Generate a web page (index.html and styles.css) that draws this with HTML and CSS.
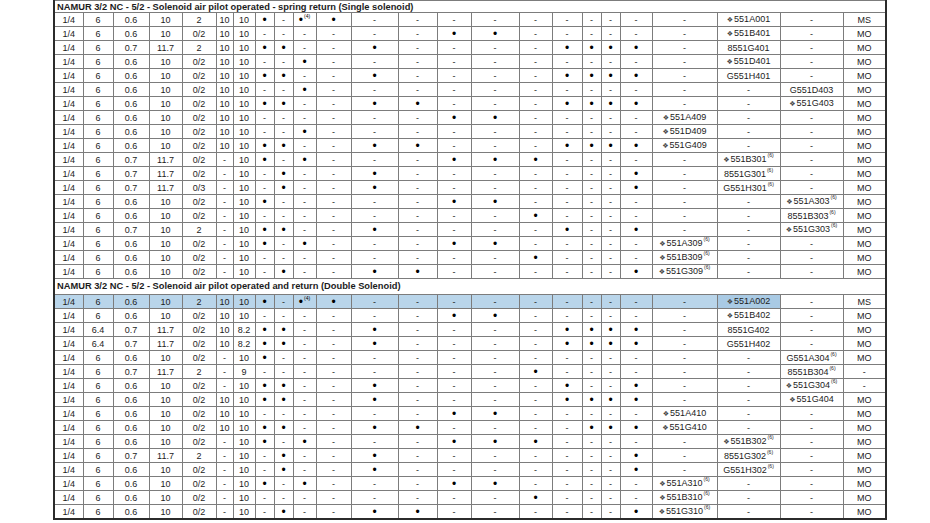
FILE: index.html
```html
<!DOCTYPE html>
<html>
<head>
<meta charset="utf-8">
<link rel="stylesheet" href="styles.css">
</head>
<body>
<div class="sheet">
<table class="grid">
<colgroup>
<col class="c1"><col class="c2"><col class="c3"><col class="c4"><col class="c5"><col class="c6"><col class="c7"><col class="c8"><col class="c9"><col class="c10"><col class="c11"><col class="c12"><col class="c13"><col class="c14"><col class="c15"><col class="c16"><col class="c17"><col class="c18"><col class="c19"><col class="c20"><col class="c21"><col class="c22"><col class="c23"><col class="c24">
</colgroup>
<tbody>
<tr class="sec first"><td colspan="24">NAMUR 3/2 NC - 5/2 - Solenoid air pilot operated - spring return (Single solenoid)</td></tr>
<tr><td>1/4</td><td>6</td><td>0.6</td><td>10</td><td>2</td><td>10</td><td>10</td><td class="b">•</td><td>-</td><td class="b">•<sup>(4)</sup></td><td class="b">•</td><td>-</td><td>-</td><td>-</td><td>-</td><td>-</td><td>-</td><td>-</td><td>-</td><td>-</td><td>-</td><td><span class="mk">❖</span>551A001</td><td>-</td><td>MS</td></tr>
<tr><td>1/4</td><td>6</td><td>0.6</td><td>10</td><td>0/2</td><td>10</td><td>10</td><td>-</td><td>-</td><td>-</td><td>-</td><td>-</td><td>-</td><td class="b">•</td><td class="b">•</td><td>-</td><td>-</td><td>-</td><td>-</td><td>-</td><td>-</td><td><span class="mk">❖</span>551B401</td><td>-</td><td>MO</td></tr>
<tr><td>1/4</td><td>6</td><td>0.7</td><td>11.7</td><td>2</td><td>10</td><td>10</td><td class="b">•</td><td class="b">•</td><td>-</td><td>-</td><td class="b">•</td><td>-</td><td>-</td><td>-</td><td>-</td><td class="b">•</td><td class="b">•</td><td class="b">•</td><td class="b">•</td><td>-</td><td>8551G401</td><td>-</td><td>MO</td></tr>
<tr><td>1/4</td><td>6</td><td>0.6</td><td>10</td><td>0/2</td><td>10</td><td>10</td><td>-</td><td>-</td><td class="b">•</td><td>-</td><td>-</td><td>-</td><td>-</td><td>-</td><td>-</td><td>-</td><td>-</td><td>-</td><td>-</td><td>-</td><td><span class="mk">❖</span>551D401</td><td>-</td><td>MO</td></tr>
<tr><td>1/4</td><td>6</td><td>0.6</td><td>10</td><td>0/2</td><td>10</td><td>10</td><td class="b">•</td><td class="b">•</td><td>-</td><td>-</td><td class="b">•</td><td>-</td><td>-</td><td>-</td><td>-</td><td class="b">•</td><td class="b">•</td><td class="b">•</td><td class="b">•</td><td>-</td><td>G551H401</td><td>-</td><td>MO</td></tr>
<tr><td>1/4</td><td>6</td><td>0.6</td><td>10</td><td>0/2</td><td>10</td><td>10</td><td>-</td><td>-</td><td class="b">•</td><td>-</td><td>-</td><td>-</td><td>-</td><td>-</td><td>-</td><td>-</td><td>-</td><td>-</td><td>-</td><td>-</td><td>-</td><td>G551D403</td><td>MO</td></tr>
<tr><td>1/4</td><td>6</td><td>0.6</td><td>10</td><td>0/2</td><td>10</td><td>10</td><td class="b">•</td><td class="b">•</td><td>-</td><td>-</td><td class="b">•</td><td class="b">•</td><td>-</td><td>-</td><td>-</td><td class="b">•</td><td class="b">•</td><td class="b">•</td><td class="b">•</td><td>-</td><td>-</td><td><span class="mk">❖</span>551G403</td><td>MO</td></tr>
<tr><td>1/4</td><td>6</td><td>0.6</td><td>10</td><td>0/2</td><td>10</td><td>10</td><td>-</td><td>-</td><td>-</td><td>-</td><td>-</td><td>-</td><td class="b">•</td><td class="b">•</td><td>-</td><td>-</td><td>-</td><td>-</td><td>-</td><td><span class="mk">❖</span>551A409</td><td>-</td><td>-</td><td>MO</td></tr>
<tr><td>1/4</td><td>6</td><td>0.6</td><td>10</td><td>0/2</td><td>10</td><td>10</td><td>-</td><td>-</td><td class="b">•</td><td>-</td><td>-</td><td>-</td><td>-</td><td>-</td><td>-</td><td>-</td><td>-</td><td>-</td><td>-</td><td><span class="mk">❖</span>551D409</td><td>-</td><td>-</td><td>MO</td></tr>
<tr><td>1/4</td><td>6</td><td>0.6</td><td>10</td><td>0/2</td><td>10</td><td>10</td><td class="b">•</td><td class="b">•</td><td>-</td><td>-</td><td class="b">•</td><td class="b">•</td><td>-</td><td>-</td><td>-</td><td class="b">•</td><td class="b">•</td><td class="b">•</td><td class="b">•</td><td><span class="mk">❖</span>551G409</td><td>-</td><td>-</td><td>MO</td></tr>
<tr><td>1/4</td><td>6</td><td>0.7</td><td>11.7</td><td>0/2</td><td>-</td><td>10</td><td class="b">•</td><td>-</td><td class="b">•</td><td>-</td><td>-</td><td>-</td><td class="b">•</td><td class="b">•</td><td class="b">•</td><td>-</td><td>-</td><td>-</td><td>-</td><td>-</td><td><span class="mk">❖</span>551B301<sup>(6)</sup></td><td>-</td><td>MO</td></tr>
<tr><td>1/4</td><td>6</td><td>0.7</td><td>11.7</td><td>0/2</td><td>-</td><td>10</td><td>-</td><td class="b">•</td><td>-</td><td>-</td><td class="b">•</td><td>-</td><td>-</td><td>-</td><td>-</td><td>-</td><td>-</td><td>-</td><td class="b">•</td><td>-</td><td>8551G301<sup>(6)</sup></td><td>-</td><td>MO</td></tr>
<tr><td>1/4</td><td>6</td><td>0.7</td><td>11.7</td><td>0/3</td><td>-</td><td>10</td><td>-</td><td class="b">•</td><td>-</td><td>-</td><td class="b">•</td><td>-</td><td>-</td><td>-</td><td>-</td><td>-</td><td>-</td><td>-</td><td class="b">•</td><td>-</td><td>G551H301<sup>(6)</sup></td><td>-</td><td>MO</td></tr>
<tr><td>1/4</td><td>6</td><td>0.6</td><td>10</td><td>0/2</td><td>-</td><td>10</td><td class="b">•</td><td>-</td><td>-</td><td>-</td><td>-</td><td>-</td><td class="b">•</td><td class="b">•</td><td>-</td><td>-</td><td>-</td><td>-</td><td>-</td><td>-</td><td>-</td><td><span class="mk">❖</span>551A303<sup>(6)</sup></td><td>MO</td></tr>
<tr><td>1/4</td><td>6</td><td>0.6</td><td>10</td><td>0/2</td><td>-</td><td>10</td><td>-</td><td>-</td><td>-</td><td>-</td><td>-</td><td>-</td><td>-</td><td>-</td><td class="b">•</td><td>-</td><td>-</td><td>-</td><td>-</td><td>-</td><td>-</td><td>8551B303<sup>(6)</sup></td><td>MO</td></tr>
<tr><td>1/4</td><td>6</td><td>0.7</td><td>10</td><td>2</td><td>-</td><td>10</td><td class="b">•</td><td class="b">•</td><td>-</td><td>-</td><td class="b">•</td><td>-</td><td>-</td><td>-</td><td>-</td><td class="b">•</td><td>-</td><td>-</td><td class="b">•</td><td>-</td><td>-</td><td><span class="mk">❖</span>551G303<sup>(6)</sup></td><td>MO</td></tr>
<tr><td>1/4</td><td>6</td><td>0.6</td><td>10</td><td>0/2</td><td>-</td><td>10</td><td class="b">•</td><td>-</td><td class="b">•</td><td>-</td><td>-</td><td>-</td><td class="b">•</td><td class="b">•</td><td>-</td><td>-</td><td>-</td><td>-</td><td>-</td><td><span class="mk">❖</span>551A309<sup>(6)</sup></td><td>-</td><td>-</td><td>MO</td></tr>
<tr><td>1/4</td><td>6</td><td>0.6</td><td>10</td><td>0/2</td><td>-</td><td>10</td><td>-</td><td>-</td><td>-</td><td>-</td><td>-</td><td>-</td><td>-</td><td>-</td><td class="b">•</td><td>-</td><td>-</td><td>-</td><td>-</td><td><span class="mk">❖</span>551B309<sup>(6)</sup></td><td>-</td><td>-</td><td>MO</td></tr>
<tr><td>1/4</td><td>6</td><td>0.6</td><td>10</td><td>0/2</td><td>-</td><td>10</td><td>-</td><td class="b">•</td><td>-</td><td>-</td><td class="b">•</td><td class="b">•</td><td>-</td><td>-</td><td>-</td><td>-</td><td>-</td><td>-</td><td class="b">•</td><td><span class="mk">❖</span>551G309<sup>(6)</sup></td><td>-</td><td>-</td><td>MO</td></tr>
<tr class="sec second"><td colspan="24">NAMUR 3/2 NC - 5/2 - Solenoid air pilot operated and return (Double Solenoid)</td></tr>
<tr class="hl"><td>1/4</td><td>6</td><td>0.6</td><td>10</td><td>2</td><td>10</td><td>10</td><td class="b">•</td><td>-</td><td class="b">•<sup>(4)</sup></td><td class="b">•</td><td>-</td><td>-</td><td>-</td><td>-</td><td>-</td><td>-</td><td>-</td><td>-</td><td>-</td><td>-</td><td class="sel"><span class="mk">❖</span>551A002</td><td>-</td><td>MS</td></tr>
<tr><td>1/4</td><td>6</td><td>0.6</td><td>10</td><td>0/2</td><td>10</td><td>10</td><td>-</td><td>-</td><td>-</td><td>-</td><td>-</td><td>-</td><td class="b">•</td><td class="b">•</td><td>-</td><td>-</td><td>-</td><td>-</td><td>-</td><td>-</td><td><span class="mk">❖</span>551B402</td><td>-</td><td>MO</td></tr>
<tr><td>1/4</td><td>6.4</td><td>0.7</td><td>11.7</td><td>0/2</td><td>10</td><td>8.2</td><td class="b">•</td><td class="b">•</td><td>-</td><td>-</td><td class="b">•</td><td>-</td><td>-</td><td>-</td><td>-</td><td class="b">•</td><td class="b">•</td><td class="b">•</td><td class="b">•</td><td>-</td><td>8551G402</td><td>-</td><td>MO</td></tr>
<tr><td>1/4</td><td>6.4</td><td>0.7</td><td>11.7</td><td>0/2</td><td>10</td><td>8.2</td><td class="b">•</td><td class="b">•</td><td>-</td><td>-</td><td class="b">•</td><td>-</td><td>-</td><td>-</td><td>-</td><td class="b">•</td><td class="b">•</td><td class="b">•</td><td class="b">•</td><td>-</td><td>G551H402</td><td>-</td><td>MO</td></tr>
<tr><td>1/4</td><td>6</td><td>0.6</td><td>10</td><td>0/2</td><td>-</td><td>10</td><td class="b">•</td><td>-</td><td>-</td><td>-</td><td>-</td><td>-</td><td>-</td><td>-</td><td>-</td><td>-</td><td>-</td><td>-</td><td>-</td><td>-</td><td>-</td><td>G551A304<sup>(6)</sup></td><td>MO</td></tr>
<tr><td>1/4</td><td>6</td><td>0.7</td><td>11.7</td><td>2</td><td>-</td><td>9</td><td>-</td><td>-</td><td>-</td><td>-</td><td>-</td><td>-</td><td>-</td><td>-</td><td class="b">•</td><td>-</td><td>-</td><td>-</td><td>-</td><td>-</td><td>-</td><td>8551B304<sup>(6)</sup></td><td>-</td></tr>
<tr><td>1/4</td><td>6</td><td>0.6</td><td>10</td><td>0/2</td><td>-</td><td>10</td><td class="b">•</td><td class="b">•</td><td>-</td><td>-</td><td class="b">•</td><td>-</td><td>-</td><td>-</td><td>-</td><td class="b">•</td><td>-</td><td>-</td><td class="b">•</td><td>-</td><td>-</td><td><span class="mk">❖</span>551G304<sup>(6)</sup></td><td>-</td></tr>
<tr><td>1/4</td><td>6</td><td>0.6</td><td>10</td><td>0/2</td><td>10</td><td>10</td><td class="b">•</td><td class="b">•</td><td>-</td><td>-</td><td class="b">•</td><td>-</td><td>-</td><td>-</td><td>-</td><td class="b">•</td><td class="b">•</td><td class="b">•</td><td class="b">•</td><td>-</td><td>-</td><td><span class="mk">❖</span>551G404</td><td>MO</td></tr>
<tr><td>1/4</td><td>6</td><td>0.6</td><td>10</td><td>0/2</td><td>10</td><td>10</td><td>-</td><td>-</td><td>-</td><td>-</td><td>-</td><td>-</td><td class="b">•</td><td class="b">•</td><td>-</td><td>-</td><td>-</td><td>-</td><td>-</td><td><span class="mk">❖</span>551A410</td><td>-</td><td>-</td><td>MO</td></tr>
<tr><td>1/4</td><td>6</td><td>0.6</td><td>10</td><td>0/2</td><td>10</td><td>10</td><td class="b">•</td><td class="b">•</td><td>-</td><td>-</td><td class="b">•</td><td class="b">•</td><td>-</td><td>-</td><td>-</td><td>-</td><td class="b">•</td><td class="b">•</td><td class="b">•</td><td><span class="mk">❖</span>551G410</td><td>-</td><td>-</td><td>MO</td></tr>
<tr><td>1/4</td><td>6</td><td>0.6</td><td>10</td><td>0/2</td><td>-</td><td>10</td><td class="b">•</td><td>-</td><td class="b">•</td><td>-</td><td>-</td><td>-</td><td class="b">•</td><td class="b">•</td><td class="b">•</td><td>-</td><td>-</td><td>-</td><td>-</td><td>-</td><td><span class="mk">❖</span>551B302<sup>(6)</sup></td><td>-</td><td>MO</td></tr>
<tr><td>1/4</td><td>6</td><td>0.7</td><td>11.7</td><td>2</td><td>-</td><td>10</td><td>-</td><td class="b">•</td><td>-</td><td>-</td><td class="b">•</td><td>-</td><td>-</td><td>-</td><td>-</td><td>-</td><td>-</td><td>-</td><td class="b">•</td><td>-</td><td>8551G302<sup>(6)</sup></td><td>-</td><td>MO</td></tr>
<tr><td>1/4</td><td>6</td><td>0.6</td><td>10</td><td>0/2</td><td>-</td><td>10</td><td>-</td><td class="b">•</td><td>-</td><td>-</td><td class="b">•</td><td>-</td><td>-</td><td>-</td><td>-</td><td>-</td><td>-</td><td>-</td><td class="b">•</td><td>-</td><td>G551H302<sup>(6)</sup></td><td>-</td><td>MO</td></tr>
<tr><td>1/4</td><td>6</td><td>0.6</td><td>10</td><td>0/2</td><td>-</td><td>10</td><td class="b">•</td><td>-</td><td class="b">•</td><td>-</td><td>-</td><td>-</td><td class="b">•</td><td class="b">•</td><td>-</td><td>-</td><td>-</td><td>-</td><td>-</td><td><span class="mk">❖</span>551A310<sup>(6)</sup></td><td>-</td><td>-</td><td>MO</td></tr>
<tr><td>1/4</td><td>6</td><td>0.6</td><td>10</td><td>0/2</td><td>-</td><td>10</td><td>-</td><td>-</td><td>-</td><td>-</td><td>-</td><td>-</td><td>-</td><td>-</td><td class="b">•</td><td>-</td><td>-</td><td>-</td><td>-</td><td><span class="mk">❖</span>551B310<sup>(6)</sup></td><td>-</td><td>-</td><td>MO</td></tr>
<tr><td>1/4</td><td>6</td><td>0.6</td><td>10</td><td>0/2</td><td>-</td><td>10</td><td>-</td><td class="b">•</td><td>-</td><td>-</td><td class="b">•</td><td class="b">•</td><td>-</td><td>-</td><td>-</td><td>-</td><td>-</td><td>-</td><td class="b">•</td><td><span class="mk">❖</span>551G310<sup>(6)</sup></td><td>-</td><td>-</td><td>MO</td></tr>
</tbody>
</table>
</div>
</body>
</html>
```
FILE: styles.css
```css
html, body {
  margin: 0;
  padding: 0;
  background: #ffffff;
}
body {
  font-family: "Liberation Sans", Arial, sans-serif;
  color: #1c1c1c;
}
.sheet {
  padding-left: 53px;
}
.grid {
  border-collapse: collapse;
  table-layout: fixed;
  width: 834px;
  font-size: 9px;
  border-left: 2px solid #2b2b2b;
  border-right: 2px solid #2b2b2b;
  border-bottom: 2px solid #2b2b2b;
}
.c1 { width: 29px; }
.c2 { width: 30px; }
.c3 { width: 36px; }
.c4 { width: 33px; }
.c5 { width: 34px; }
.c6 { width: 17px; }
.c7 { width: 22px; }
.c8 { width: 19px; }
.c9 { width: 19px; }
.c10 { width: 23px; }
.c11 { width: 35px; }
.c12 { width: 47px; }
.c13 { width: 39px; }
.c14 { width: 34px; }
.c15 { width: 48px; }
.c16 { width: 33px; }
.c17 { width: 30px; }
.c18 { width: 19px; }
.c19 { width: 19px; }
.c20 { width: 32px; }
.c21 { width: 65px; }
.c22 { width: 63px; }
.c23 { width: 63px; }
.c24 { width: 43px; }
.grid td {
  border: 1px solid #7c7c7c;
  height: 13px;
  padding: 0;
  line-height: 12px;
  text-align: center;
  white-space: nowrap;
  overflow: hidden;
}
.grid td.b {
  font-size: 12px;
  color: #000;
}
.mk {
  font-family: "DejaVu Sans", sans-serif;
  font-size: 7px;
  color: #444;
  margin-right: 1px;
}
.grid sup {
  font-size: 5px;
  line-height: 0;
  vertical-align: 5px;
  margin-left: 1px;
}
.grid td.b sup {
  vertical-align: 6px;
}
.sec td {
  text-align: left;
  font-weight: bold;
  font-size: 9.3px;
  padding-left: 2px;
  background: #ffffff;
}
.sec.first td {
  height: 11px;
  line-height: 10px;
  border-top: 1px solid #7c7c7c;
}
.sec.second td {
  height: 14px;
  line-height: 15px;
}
.hl td {
  background: #b9d5ea;
}
.hl td.sel {
  background: #a9cae4;
}
.hl td:nth-child(n+23) {
  background: #ffffff;
}
```
